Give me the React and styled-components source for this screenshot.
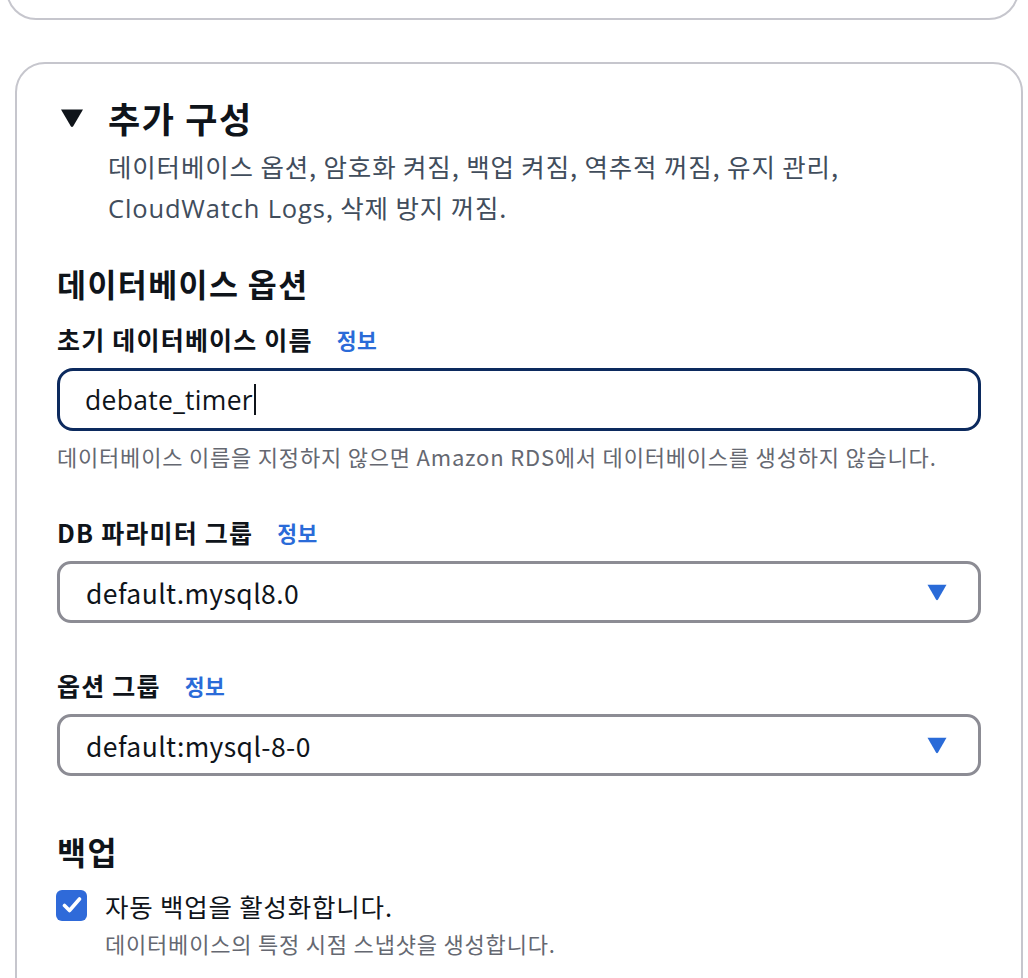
import React from "react";
import styled, { createGlobalStyle } from "styled-components";

const Global = createGlobalStyle`
  html, body { margin: 0; padding: 0; background: #ffffff; }
  body {
    font-family: "Noto Sans CJK KR", "Open Sans", sans-serif;
    color: #000716;
    -webkit-font-smoothing: antialiased;
  }
  * { box-sizing: border-box; }
`;

const Page = styled.div`
  width: 1028px;
  height: 978px;
  overflow: hidden;
  display: flex;
  flex-direction: column;
`;

const PrevCard = styled.div`
  margin-top: -42px;
  margin-left: 6px;
  width: 1013px;
  height: 62px;
  flex-shrink: 0;
  border: 2px solid #c6c6cd;
  border-radius: 30px;
`;

const Card = styled.section`
  margin-top: 42px;
  margin-left: 15px;
  width: 1008px;
  flex-shrink: 0;
  border: 2px solid #c6c6cd;
  border-radius: 30px;
  padding: 32px 40px 60px 40px;
`;

const Header = styled.div`
  display: flex;
  align-items: center;
  gap: 24px;
  padding-left: 3px;
`;

const Title = styled.h2`
  margin: 0;
  font-size: 35px;
  line-height: 44px;
  letter-spacing: 1.6px;
  font-weight: 700;
  color: #0f141a;
`;

const Description = styled.p`
  margin: 5px 0 0 51px;
  font-size: 25.5px;
  line-height: 41px;
  letter-spacing: 0.85px;
  color: #414d5c;
  font-weight: 400;
`;

const Latin = styled.span`
  font-family: "Open Sans", "Noto Sans CJK KR", sans-serif;
`;

const SectionTitle = styled.h3`
  margin: ${(p) => p.$mt || 0}px 0 0 0;
  font-size: 31.5px;
  line-height: 40px;
  letter-spacing: 1.4px;
  font-weight: 700;
  color: #0f141a;
`;

const Field = styled.div`
  margin-top: ${(p) => p.$mt || 0}px;
  display: flex;
  flex-direction: column;
`;

const LabelRow = styled.div`
  display: flex;
  align-items: center;
  gap: 24px;
  height: 34px;
`;

const Label = styled.span`
  font-size: 25px;
  letter-spacing: 1.2px;
  font-weight: 700;
  color: #0f141a;
`;

const InfoLink = styled.a`
  font-size: 21.5px;
  letter-spacing: 0.5px;
  font-weight: 700;
  color: #2a6bd8;
  text-decoration: none;
`;

const InputBox = styled.div`
  margin-top: 12px;
  height: 63px;
  border: 3.5px solid #0c2a5e;
  border-radius: 16px;
  display: flex;
  align-items: center;
  padding-left: 25px;
  font-family: "Open Sans", "Noto Sans CJK KR", sans-serif;
  font-size: 26.5px;
  letter-spacing: 0.3px;
  color: #0f141a;
`;

const TextCaret = styled.span`
  display: inline-block;
  width: 2px;
  height: 31px;
  background: #0f141a;
  margin-left: 1px;
`;

const Hint = styled.div`
  margin-top: 10px;
  font-size: 22px;
  line-height: 30px;
  letter-spacing: 0.8px;
  color: #656871;
`;

const SelectBox = styled.div`
  margin-top: 12px;
  height: 62px;
  border: 3px solid #8c8c94;
  border-radius: 14px;
  display: flex;
  align-items: center;
  justify-content: space-between;
  padding: 0 31px 0 26px;
  font-size: 26.5px;
  letter-spacing: 0.4px;
  color: #0f141a;
`;

const CheckRow = styled.div`
  margin-top: 16px;
  display: flex;
  align-items: center;
  gap: 18px;
  height: 36px;
`;

const CheckBox = styled.span`
  width: 31px;
  height: 31px;
  border-radius: 6px;
  background: #2f6ad9;
  display: inline-flex;
  align-items: center;
  justify-content: center;
  margin-left: -1px;
`;

const CheckLabel = styled.span`
  font-size: 25.5px;
  letter-spacing: 0.8px;
  color: #0f141a;
`;

const CheckHint = styled.div`
  margin: 5px 0 0 48px;
  font-size: 22px;
  line-height: 30px;
  letter-spacing: 0.8px;
  color: #656871;
`;

const Caret = () => (
  <svg width="24" height="20" viewBox="0 0 24 20" aria-hidden="true">
    <path d="M1 1.5 L23 1.5 L13.2 18.2 Q12 19.8 10.8 18.2 Z" fill="#0f141a" />
  </svg>
);

const DropArrow = () => (
  <svg width="20" height="17" viewBox="0 0 20 17" aria-hidden="true">
    <path d="M0.5 0.8 L19.5 0.8 L11 15.6 Q10 17 9 15.6 Z" fill="#2a6bd8" />
  </svg>
);

const Check = () => (
  <svg width="20" height="18" viewBox="0 0 20 18" aria-hidden="true">
    <path
      d="M2.5 9.5 L7.5 14.5 L17.5 3"
      fill="none"
      stroke="#ffffff"
      strokeWidth="3.6"
      strokeLinecap="round"
      strokeLinejoin="round"
    />
  </svg>
);

const Select = ({ value }) => (
  <SelectBox>
    <span>{value}</span>
    <DropArrow />
  </SelectBox>
);

export default function App() {
  return (
    <>
      <Global />
      <Page>
        <PrevCard />
        <Card>
          <Header>
            <Caret />
            <Title>추가 구성</Title>
          </Header>
          <Description>
            데이터베이스 옵션, 암호화 켜짐, 백업 켜짐, 역추적 꺼짐, 유지 관리,
            <br />
            <Latin>CloudWatch Logs</Latin>, 삭제 방지 꺼짐.
          </Description>

          <SectionTitle $mt={34}>데이터베이스 옵션</SectionTitle>

          <Field $mt={19}>
            <LabelRow>
              <Label>초기 데이터베이스 이름</Label>
              <InfoLink href="#">정보</InfoLink>
            </LabelRow>
            <InputBox>
              debate_timer
              <TextCaret />
            </InputBox>
            <Hint>
              데이터베이스 이름을 지정하지 않으면 Amazon RDS에서 데이터베이스를
              생성하지 않습니다.
            </Hint>
          </Field>

          <Field $mt={44}>
            <LabelRow>
              <Label>DB 파라미터 그룹</Label>
              <InfoLink href="#">정보</InfoLink>
            </LabelRow>
            <Select value="default.mysql8.0" />
          </Field>

          <Field $mt={45}>
            <LabelRow>
              <Label>옵션 그룹</Label>
              <InfoLink href="#">정보</InfoLink>
            </LabelRow>
            <Select value="default:mysql-8-0" />
          </Field>

          <SectionTitle $mt={55}>백업</SectionTitle>
          <CheckRow>
            <CheckBox>
              <Check />
            </CheckBox>
            <CheckLabel>자동 백업을 활성화합니다.</CheckLabel>
          </CheckRow>
          <CheckHint>데이터베이스의 특정 시점 스냅샷을 생성합니다.</CheckHint>
        </Card>
      </Page>
    </>
  );
}
